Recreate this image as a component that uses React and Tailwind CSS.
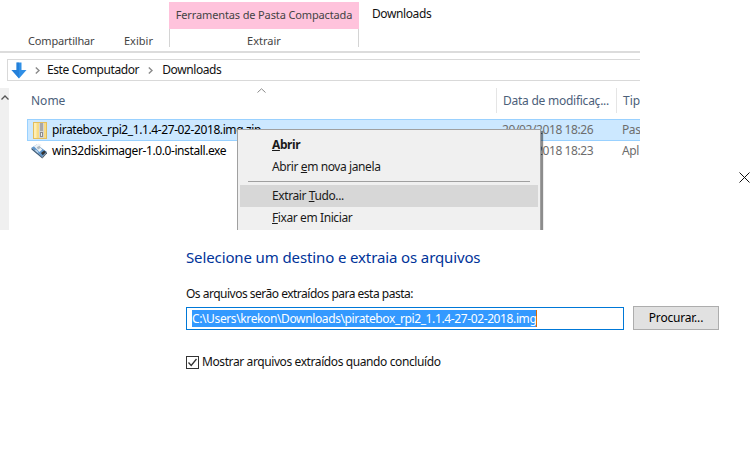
const font = { fontFamily: '"Noto Sans", "Open Sans", sans-serif' };

function ArrowIcon() {
  return (
    <svg width="16" height="17" viewBox="0 0 16 17" className="shrink-0">
      <path d="M5.5 0.5h5v7.500h5L8 16.500 0.500 8h5z" fill="#2f8fe6" />
      <path d="M5.5 0.5h2.500v16L0.500 8h5z" fill="#1c74cf" opacity="0.55" />
    </svg>
  );
}

function Chevron() {
  return (
    <svg width="5" height="7" viewBox="0 0 5 7" className="shrink-0">
      <path d="M0.800 0.500L4 3.500L0.800 6.500" fill="none" stroke="#8a8a8a" strokeWidth="1.400" />
    </svg>
  );
}

function ZipIcon() {
  return (
    <svg width="14" height="17" viewBox="0 0 14 17" className="shrink-0">
      <rect x="0.500" y="0.500" width="13" height="16" fill="#f8dc84" stroke="#e3bd5c" />
      <rect x="1" y="1" width="2.500" height="15" fill="#fdeeb5" />
      <rect x="6" y="1" width="5" height="15" fill="#d4d4d4" />
      <path d="M7 2h3M7 4h3M7 6h3M7 8h3" stroke="#7d7d7d" strokeWidth="1" />
      <rect x="7" y="10" width="3" height="5" fill="#8c8c8c" />
      <rect x="8" y="11" width="1" height="3" fill="#eee" />
    </svg>
  );
}

function DiskIcon() {
  return (
    <svg width="17" height="16" viewBox="0 0 18 17" className="shrink-0">
      <path d="M0.500 5L6 1.500l11 8-5 5.500z" fill="#5f96cc" />
      <path d="M0.500 5L12 15v1.500L0.500 7z" fill="#3d5a76" />
      <path d="M12 15l5-5.500V11l-5 5.500z" fill="#4b5864" />
      <path d="M3 3.500L8 0.500l3.500 1.500L9 4l3 3-3 2.500z" fill="#eef2f5" />
      <path d="M6 4.500l3-1.500 1.500 2-3 2z" fill="#aeb9c2" />
      <path d="M10.500 10.500l3.500-2.500 2 1.500-3.500 3.500z" fill="#333" />
      <rect x="4" y="8" width="4" height="1.500" fill="#bcd6ee" transform="rotate(40 6 9)" />
    </svg>
  );
}

function Header() {
  return (
    <div className="flex h-[25px] items-center text-[12px] text-[#4c607a] relative">
      <span className="w-[466px] pl-[1px]">Nome</span>
      <div className="h-full w-[120px] border-l border-[#e5e5e5] pl-[6px] leading-[25px] tracking-[-0.25px] whitespace-nowrap overflow-hidden">Data de modificaç...</div>
      <div className="h-full flex-1 border-l border-[#e5e5e5] pl-[6px] leading-[25px]">Tip</div>
      <svg width="9" height="5" viewBox="0 0 9 5" className="absolute left-[227px] top-0">
        <path d="M0.500 4.500L4.500 0.800L8.500 4.500" fill="none" stroke="#8a8a8a" />
      </svg>
    </div>
  );
}

function FileRow({ selected, icon, name, date, type }) {
  return (
    <div
      className={
        "flex h-[22px] items-center text-[12px] tracking-[-0.4px] text-black border " +
        (selected ? "bg-[#cce8ff] border-[#99d1ff]" : "border-transparent")
      }
    >
      <div className="w-[23px] mr-[1px] flex justify-center shrink-0">{icon}</div>
      <span className="w-[450px] whitespace-nowrap">{name}</span>
      <span className="w-[120px] text-[#6d6d6d] whitespace-nowrap">{date}</span>
      <span className="text-[#6d6d6d]">{type}</span>
    </div>
  );
}

function MenuItem({ active, bold, children }) {
  return (
    <div
      className={
        "h-[22px] flex items-center pl-[32px] text-[12px] text-[#1a1a1a] tracking-[-0.4px] " +
        (active ? "bg-[#d7d7d7] " : "") +
        (bold ? "font-bold" : "")
      }
    >
      <span>{children}</span>
    </div>
  );
}

function ContextMenu() {
  return (
    <div className="absolute left-[237px] top-[129px] w-[304px] h-[120px] bg-[#f0f0f0] border border-[#a0a0a0] px-[2px] pt-[4px] shadow-[2px_2px_1px_rgba(0,0,0,0.45)]">
      <MenuItem bold><u>A</u>brir</MenuItem>
      <MenuItem>Abrir <u>e</u>m nova janela</MenuItem>
      <div className="h-px bg-[#a0a0a0] mx-[8px] mt-[3px] mb-[3px]" />
      <MenuItem active>Extrair <u>T</u>udo...</MenuItem>
      <MenuItem><u>F</u>ixar em Iniciar</MenuItem>
    </div>
  );
}

export default function App() {
  return (
    <div className="relative w-[750px] h-[450px] bg-white overflow-hidden" style={font}>
      <div className="relative w-[640px] h-[230px] overflow-hidden">
        <div className="h-[53px] border-b-2 border-[#dcdcdc]">
          <div className="flex h-[29px] pt-[2px] ml-[169px]">
            <div className="w-[190px] bg-[#ffc3dc] flex items-center justify-center text-[11px] tracking-[-0.13px] text-[#444] whitespace-nowrap">
              Ferramentas de Pasta Compactada
            </div>
            <div className="ml-[13px] pt-[3px] text-[12px] tracking-[-0.4px] text-[#111]">Downloads</div>
          </div>
          <div className="flex h-[18px] text-[11px] text-[#444]">
            <span className="ml-[28px] w-[96px] leading-[24px] tracking-[-0.17px]">Compartilhar</span>
            <span className="w-[45px] leading-[24px]">Exibir</span>
            <div className="w-[190px] border-x border-[#d4d4d4] text-center leading-[24px]">Extrair</div>
          </div>
        </div>
        <div className="ml-[7px] mt-[6px] h-[22px] border-y border-l border-[#d9d9d9] flex items-center text-[12px] tracking-[-0.4px] text-[#111]">
          <div className="ml-[3px]"><ArrowIcon /></div>
          <div className="ml-[8px]"><Chevron /></div>
          <span className="ml-[7px]">Este Computador</span>
          <div className="ml-[9px]"><Chevron /></div>
          <span className="ml-[9px]">Downloads</span>
        </div>
        <div className="flex h-[149px] mt-[7px]">
          <div className="w-[10px] h-full bg-[#f0f0f0] flex flex-col items-center justify-between">
            <svg width="8" height="5" viewBox="0 0 8 5" className="mt-[7px]">
              <path d="M0.500 4.500L4 1L7.500 4.500" fill="none" stroke="#555" strokeWidth="1.300" />
            </svg>
            <div className="w-[9px] h-[6px] bg-[#cdcdcd] self-start" />
          </div>
          <div className="flex-1 pl-[18px]">
            <div className="pl-[3px]"><Header /></div>
            <div className="mt-[6px]">
              <FileRow selected icon={<ZipIcon />} name="piratebox_rpi2_1.1.4-27-02-2018.img.zip" date="20/02/2018 18:26" type="Pas" />
              <div className="mt-[-1px]">
                <FileRow icon={<DiskIcon />} name="win32diskimager-1.0.0-install.exe" date="20/02/2018 18:23" type="Apl" />
              </div>
            </div>
          </div>
        </div>
        <ContextMenu />
      </div>

      <svg width="11" height="11" viewBox="0 0 11 11" className="absolute left-[739px] top-[172px]">
        <path d="M0.500 0.500L10.500 10.500M10.500 0.500L0.500 10.500" stroke="#111" strokeWidth="1" />
      </svg>

      <div className="ml-[186px] w-[533px]">
        <h1 className="mt-[16px] text-[15px] leading-[22px] font-normal text-[#003399] tracking-[-0.12px] whitespace-nowrap">
          Selecione um destino e extraia os arquivos
        </h1>
        <p className="mt-[18px] text-[12px] leading-[16px] text-[#111] tracking-[-0.5px]">Os arquivos serão extraídos para esta pasta:</p>
        <div className="mt-[4px] flex items-start">
          <div className="w-[438px] h-[23px] mt-[1px] border border-[#0078d7] flex items-center pl-[5px] text-[12px] tracking-[-0.38px] whitespace-nowrap">
            <span className="bg-[#3399ff] text-white leading-[17px] border-r border-[#d96a00]">C:\Users\krekon\Downloads\piratebox_rpi2_1.1.4-27-02-2018.img</span>
          </div>
          <button className="ml-[9px] w-[86px] h-[24px] bg-[#e1e1e1] border border-[#adadad] text-[12px] tracking-[-0.2px] text-black">Procurar...</button>
        </div>
        <label className="mt-[24px] flex items-center text-[12px] text-[#111] tracking-[-0.4px] leading-[16px]">
          <span className="w-[13px] h-[13px] border border-[#333] flex items-center justify-center">
            <svg width="11" height="11" viewBox="0 0 11 11">
              <path d="M1.500 5.500L4.200 8.500L9.500 2" fill="none" stroke="#333" strokeWidth="1.300" />
            </svg>
          </span>
          <span className="ml-[3px]">Mostrar arquivos extraídos quando concluído</span>
        </label>
      </div>
    </div>
  );
}
